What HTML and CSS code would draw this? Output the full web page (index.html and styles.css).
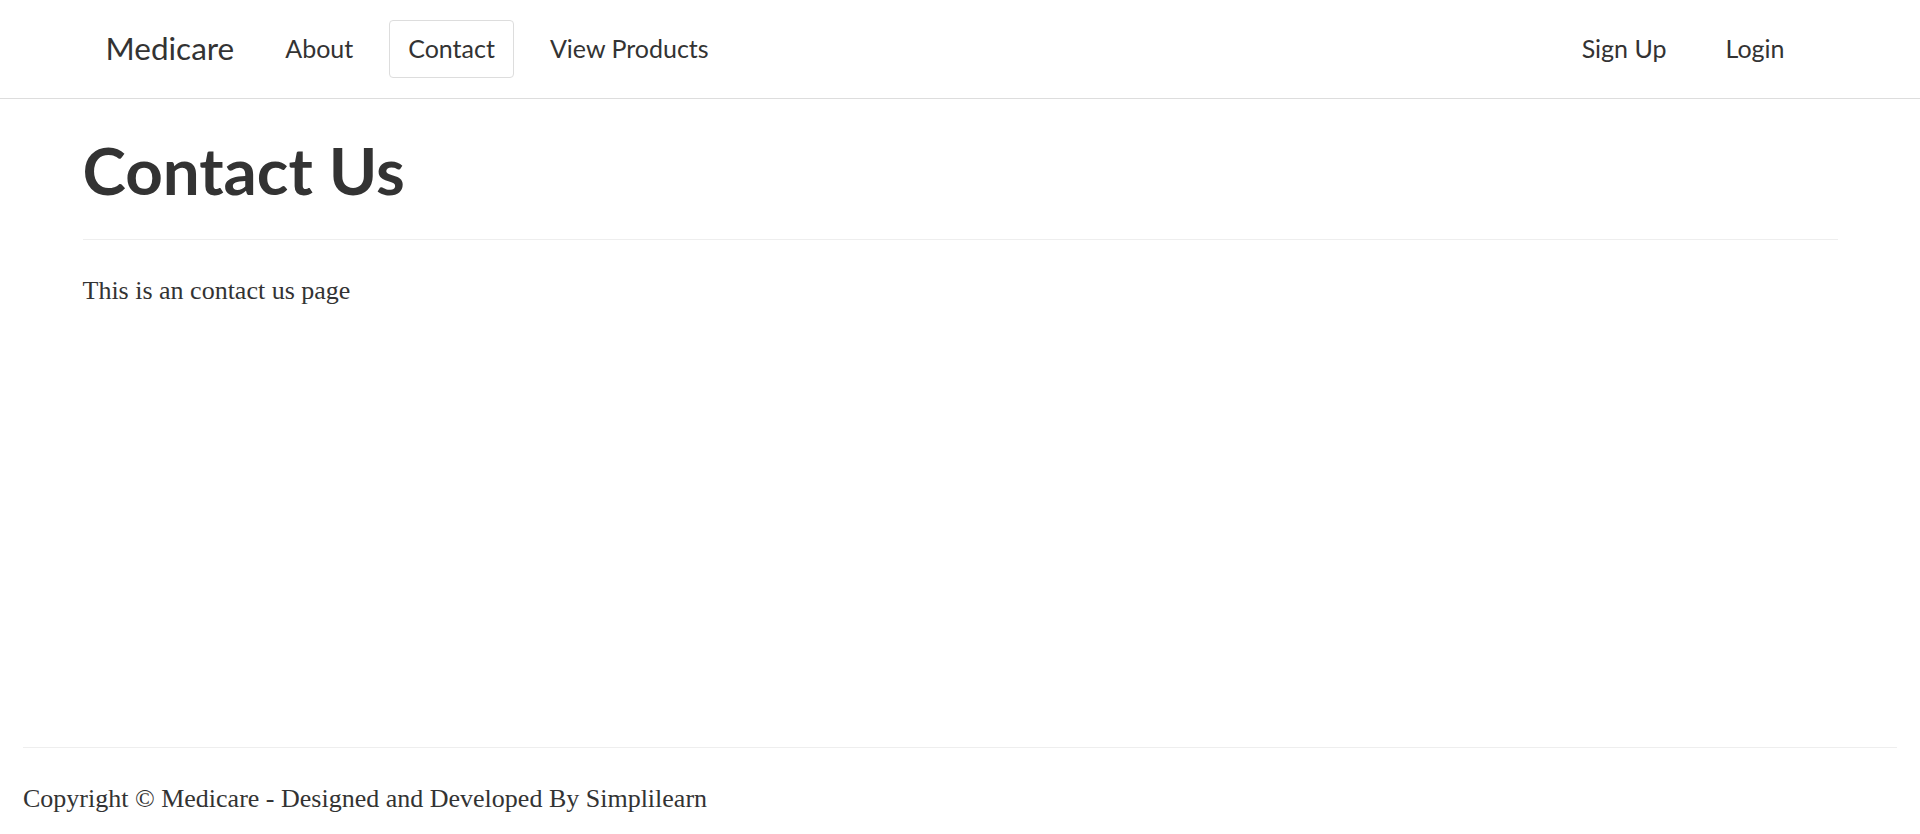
FILE: index.html
```html
<!DOCTYPE html>
<html lang="en">
<head>
<meta charset="utf-8">
<title>Medicare - Contact Us</title>
<link rel="stylesheet" href="styles.css">
</head>
<body>
<header class="navbar">
  <div class="nav-inner">
    <a class="brand" href="#">Medicare</a>
    <ul class="nav">
      <li><a class="nav-link" href="#">About</a></li>
      <li><a class="nav-link active" href="#">Contact</a></li>
      <li><a class="nav-link" href="#">View Products</a></li>
    </ul>
    <ul class="nav nav-right">
      <li><a class="nav-link" href="#">Sign Up</a></li>
      <li><a class="nav-link" href="#">Login</a></li>
    </ul>
  </div>
</header>
<main class="content">
  <h1 class="page-title">Contact Us</h1>
  <hr class="rule">
  <p class="lead-text">This is an contact us page</p>
</main>
<footer class="footer">
  <hr class="footer-rule">
  <p class="copyright">Copyright © Medicare - Designed and Developed By Simplilearn</p>
</footer>
</body>
</html>
```

FILE: styles.css
```css
html, body {
  margin: 0;
  padding: 0;
  background: #fff;
}
body {
  min-height: 100vh;
  display: flex;
  flex-direction: column;
  font-family: "Liberation Serif", "Times New Roman", serif;
  font-size: 26px;
  line-height: 1.5;
  color: #333;
}
a {
  text-decoration: none;
  color: #333;
}
.navbar {
  border-bottom: 1px solid #dddddd;
}
.nav-inner {
  width: 1755px;
  margin: 0 auto;
  box-sizing: border-box;
  padding: 0 34px 0 23px;
  height: 98px;
  display: flex;
  align-items: center;
  font-family: Lato, "Open Sans", sans-serif;
}
.brand {
  font-size: 31.5px;
  margin-right: 32px;
  color: #333;
}
.nav {
  list-style: none;
  margin: 0;
  padding: 0;
  display: flex;
  gap: 17px;
}
.nav-right {
  margin-left: auto;
  gap: 21px;
}
.nav-link {
  display: flex;
  align-items: center;
  height: 56px;
  padding: 0 18px;
  font-size: 25px;
  border: 1px solid transparent;
  border-radius: 4px;
}
.nav-link.active {
  border-color: #dddddd;
}
.content {
  flex: 1;
  width: 1755px;
  margin: 0 auto;
  padding-top: 35px;
}
.page-title {
  margin: 0;
  font-family: Lato, "Open Sans", sans-serif;
  font-weight: 700;
  font-size: 65.5px;
  line-height: 1.1;
  color: #333;
}
.rule {
  margin: 33px 0 31px;
  border: 0;
  border-top: 1px solid #eeeeee;
}
.lead-text {
  margin: 0;
}
.footer {
  padding: 0 23px 16px;
}
.footer-rule {
  margin: 0 0 31px;
  border: 0;
  border-top: 1px solid #eeeeee;
}
.copyright {
  margin: 0;
}
```
